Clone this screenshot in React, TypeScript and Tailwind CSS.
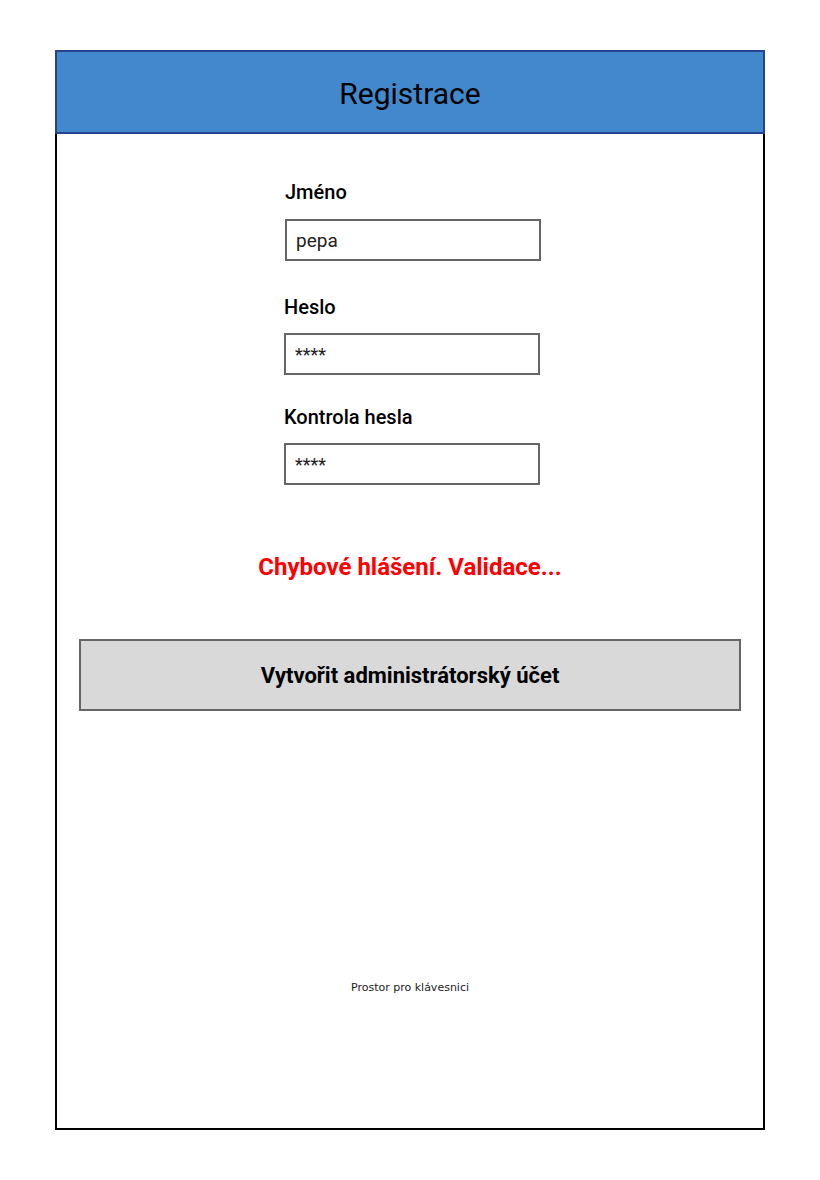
import { useState } from 'react';

export default function App() {
  const [name, setName] = useState('pepa');
  const [password, setPassword] = useState('****');
  const [passwordCheck, setPasswordCheck] = useState('****');

  return (
    <div className="min-h-[1180px] bg-white pt-[50px] pl-[55px] font-['Roboto',sans-serif]">
      <div className="w-[710px]">
        {/* Header */}
        <div className="h-[84px] border-2 border-[#24428f] bg-[#4288cc] flex items-center justify-center pt-[3px]">
          <h1 className="text-[30px] leading-none text-black">Registrace</h1>
        </div>

        {/* Form body */}
        <div className="h-[996px] border-2 border-t-0 border-black flex flex-col">
          <div className="ml-[227px] mt-[46px] w-[256px] flex flex-col">
            <label className="ml-px text-[20px] leading-6 font-medium text-black">Jméno</label>
            <input
              value={name}
              onChange={(e) => setName(e.target.value)}
              className="ml-px mt-[15px] h-[42px] w-[256px] border-2 border-[#666666] px-[9px] text-[19px] text-[#222] outline-none"
            />

            <label className="mt-[34px] text-[20px] leading-6 font-medium text-black">Heslo</label>
            <input
              value={password}
              onChange={(e) => setPassword(e.target.value)}
              className="mt-[14px] h-[42px] w-[256px] border-2 border-[#666666] px-[9px] text-[18px] text-[#222] outline-none"
            />

            <label className="mt-[30px] text-[20px] leading-6 font-medium text-black">Kontrola hesla</label>
            <input
              value={passwordCheck}
              onChange={(e) => setPasswordCheck(e.target.value)}
              className="mt-[14px] h-[42px] w-[256px] border-2 border-[#666666] px-[9px] text-[18px] text-[#222] outline-none"
            />
          </div>

          {/* Validation message */}
          <p className="mt-[67px] text-center text-[24px] leading-[30px] font-bold text-[#ff0000]">
            Chybové hlášení. Validace...
          </p>

          <button className="mx-[22px] mt-[57px] h-[72px] border-2 border-[#666666] bg-[#d9d9d9] text-[22px] font-bold text-black">
            Vytvořit administrátorský účet
          </button>

          {/* Keyboard placeholder */}
          <p className="mt-[269px] text-center text-[11px] leading-4 text-[#222] font-['Comic_Sans_MS','DejaVu_Sans',sans-serif]">
            Prostor pro klávesnici
          </p>
        </div>
      </div>
    </div>
  );
}
